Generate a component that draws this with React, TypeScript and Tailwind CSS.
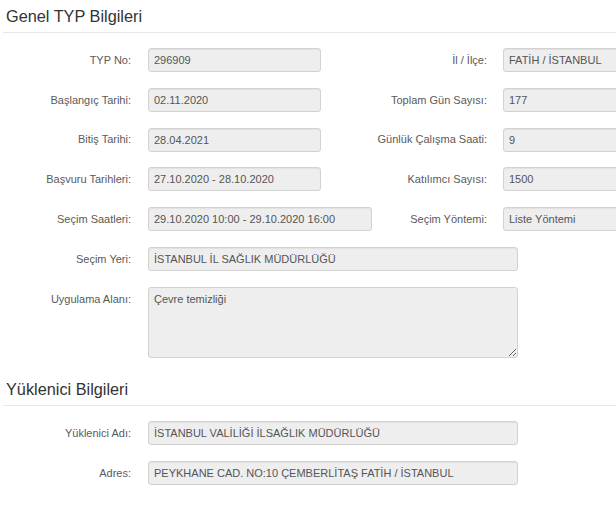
import type { ReactNode } from 'react';

type Field = { label: string; value: string; wide?: boolean };

const genelRows: { left: Field; right?: Field }[] = [
  { left: { label: 'TYP No:', value: '296909' }, right: { label: 'İl / İlçe:', value: 'FATİH / İSTANBUL' } },
  { left: { label: 'Başlangıç Tarihi:', value: '02.11.2020' }, right: { label: 'Toplam Gün Sayısı:', value: '177' } },
  { left: { label: 'Bitiş Tarihi:', value: '28.04.2021' }, right: { label: 'Günlük Çalışma Saati:', value: '9' } },
  { left: { label: 'Başvuru Tarihleri:', value: '27.10.2020 - 28.10.2020' }, right: { label: 'Katılımcı Sayısı:', value: '1500' } },
  {
    left: { label: 'Seçim Saatleri:', value: '29.10.2020 10:00 - 29.10.2020 16:00', wide: true },
    right: { label: 'Seçim Yöntemi:', value: 'Liste Yöntemi' },
  },
];

const inputClass =
  'h-[24px] rounded-[3px] border border-[#d2d2d2] bg-[#eeeeee] px-[5px] text-[11px] text-[#555] shadow-[inset_0_1px_1px_rgba(0,0,0,0.05)] outline-none';

function SectionTitle({ children }: { children: ReactNode }) {
  return (
    <div className="ml-[3px] h-[33px] border-b border-[#e8e8e8] pt-[6px] pl-[3px]">
      <h4 className="text-[16.3px] leading-[20px] text-[#333]">{children}</h4>
    </div>
  );
}

function Label({ children, width }: { children: ReactNode; width: string }) {
  return (
    <div className={`${width} h-[24px] shrink-0 flex items-center justify-end whitespace-nowrap text-[#5a5a5a]`}>
      {children}
    </div>
  );
}

export default function App() {
  return (
    <div className="w-[616px] h-[515px] overflow-hidden bg-white font-['Liberation_Sans',Arial,sans-serif] text-[11px]">
      <div className="w-[720px]">
        <SectionTitle>Genel TYP Bilgileri</SectionTitle>

        <div className="mt-[15px] flex flex-col gap-[15.8px]">
          {genelRows.map((row) => (
            <div key={row.left.label} className="flex items-center">
              <div className="flex w-[380px] shrink-0 items-center">
                <Label width="w-[131px]">{row.left.label}</Label>
                <input
                  readOnly
                  value={row.left.value}
                  className={`${inputClass} ml-[17px] ${row.left.wide ? 'w-[224px]' : 'w-[173px]'}`}
                />
              </div>
              {row.right && (
                <div className="flex items-center">
                  <Label width="w-[107px]">{row.right.label}</Label>
                  <input readOnly value={row.right.value} className={`${inputClass} ml-[16px] w-[173px]`} />
                </div>
              )}
            </div>
          ))}

          <div className="flex items-center">
            <Label width="w-[131px]">Seçim Yeri:</Label>
            <input readOnly value="İSTANBUL İL SAĞLIK MÜDÜRLÜĞÜ" className={`${inputClass} ml-[17px] w-[370px]`} />
          </div>

          <div className="flex items-start">
            <Label width="w-[131px]">Uygulama Alanı:</Label>
            <textarea
              readOnly
              value="Çevre temizliği"
              className="ml-[17px] h-[71px] w-[370px] rounded-[3px] border border-[#d2d2d2] bg-[#eeeeee] px-[5px] pt-[4px] text-[11px] leading-[14px] text-[#555] outline-none"
            />
          </div>
        </div>

        <div className="mt-[15px]">
          <SectionTitle>Yüklenici Bilgileri</SectionTitle>
        </div>

        <div className="mt-[15px] flex flex-col gap-[16px]">
          <div className="flex items-center">
            <Label width="w-[131px]">Yüklenici Adı:</Label>
            <input
              readOnly
              value="İSTANBUL VALİLİĞİ İLSAĞLIK MÜDÜRLÜĞÜ"
              className={`${inputClass} ml-[17px] w-[370px]`}
            />
          </div>
          <div className="flex items-center">
            <Label width="w-[131px]">Adres:</Label>
            <input
              readOnly
              value="PEYKHANE CAD. NO:10 ÇEMBERLİTAŞ FATİH / İSTANBUL"
              className={`${inputClass} ml-[17px] w-[370px]`}
            />
          </div>
        </div>
      </div>
    </div>
  );
}
